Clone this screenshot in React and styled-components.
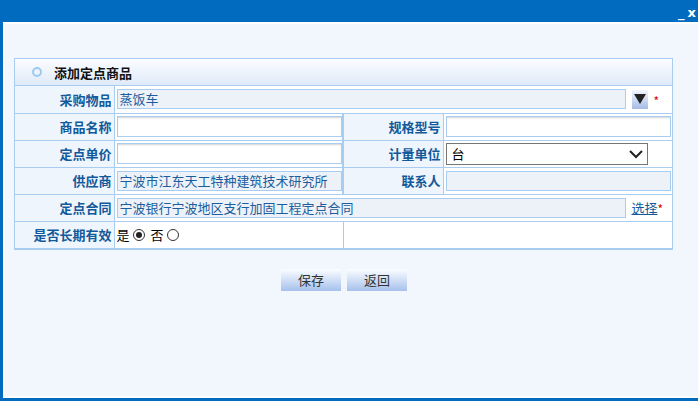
import styled, { createGlobalStyle } from 'styled-components';

const GlobalStyle = createGlobalStyle`
  html, body {
    margin: 0;
    padding: 0;
    background: #ffffff;
  }
  body {
    font-family: "Noto Sans CJK SC", "DejaVu Sans", sans-serif;
    font-size: 13px;
  }
`;

const Window = styled.div`
  width: 698px;
  height: 401px;
  display: flex;
  flex-direction: column;
  overflow: hidden;
`;

const TitleBar = styled.div`
  height: 22px;
  background: #016bc0;
  display: flex;
  justify-content: flex-end;
  align-items: flex-end;
  padding: 0 2px 2px 0;
  box-sizing: border-box;
  color: #ffffff;
  font-family: "DejaVu Sans", sans-serif;
  font-size: 13px;
  font-weight: bold;
  gap: 3px;
`;

const Body = styled.div`
  flex: 1;
  border-left: 3px solid #016bc0;
  border-bottom: 3px solid #016bc0;
  background: #ffffff;
  padding: 2px 0 2px 2px;
  display: flex;
`;

const Inner = styled.div`
  flex: 1;
  background: #f2f7fe;
  padding: 34px 0 0 9px;
`;

const Panel = styled.div`
  width: 657px;
  border: 1px solid #a9cdf0;
  background: #ffffff;
`;

const PanelHeader = styled.div`
  height: 26px;
  border-bottom: 1px solid #a9cdf0;
  background: linear-gradient(#fbfdff, #dfeaf9);
  display: flex;
  align-items: center;
  padding-left: 17px;
  gap: 12px;
  font-weight: bold;
  color: #111111;
`;

const Ring = styled.span`
  width: 6px;
  height: 6px;
  border-radius: 50%;
  border: 2px solid #9ccaf0;
`;

const Table = styled.table`
  width: 100%;
  border-collapse: collapse;
  table-layout: fixed;
`;

const Row = styled.tr`
  height: 27px;
`;

const Label = styled.td`
  background: #eef5fd;
  color: #12599b;
  font-weight: bold;
  text-align: right;
  padding: 0 2px 0 0;
  border-bottom: 1px solid #a9cdf0;
  border-right: 1px solid #a9cdf0;
  border-left: ${(p) => (p.$second ? '2px solid #a9cdf0' : 'none')};
`;

const Cell = styled.td`
  padding: 0 0 0 2px;
  border-bottom: 1px solid #a9cdf0;
  border-right: ${(p) => (p.$divider ? '1px solid #a9cdf0' : 'none')};
  background: #ffffff;
`;

const Line = styled.div`
  display: flex;
  align-items: center;
`;

const TextBox = styled.div`
  box-sizing: border-box;
  width: ${(p) => p.$w}px;
  height: ${(p) => (p.$ro ? 20 : 21)}px;
  border: 1px solid #a9cdf0;
  background: ${(p) => (p.$ro ? '#edf2f8' : '#ffffff')};
  box-shadow: ${(p) => (p.$ro ? 'none' : 'inset 0 2px 2px -1px #d4d4d4')};
  color: #1c5d9d;
  padding: 0 2px;
  line-height: 18px;
  white-space: nowrap;
  overflow: hidden;
`;

const Select = styled.div`
  box-sizing: border-box;
  width: 202px;
  height: 22px;
  border: 1px solid #767676;
  background: #ffffff;
  display: flex;
  align-items: center;
  justify-content: space-between;
  padding: 0 4px 0 5px;
  color: #000000;
`;

const DropButton = styled.span`
  width: 16px;
  height: 19px;
  margin-left: 6px;
  background: linear-gradient(#f2f6fd, #a5bce6);
  display: flex;
  align-items: center;
  justify-content: center;
`;

const Required = styled.span`
  color: #e00000;
  font-size: 12px;
  margin-left: ${(p) => p.$ml || 0}px;
  line-height: 1;
  padding-top: 3px;
`;

const LinkText = styled.a`
  color: #12599b;
  text-decoration: underline;
  margin-left: 6px;
  cursor: pointer;
`;

const RadioText = styled.span`
  color: #000000;
`;

const Radio = styled.span`
  box-sizing: border-box;
  width: 12px;
  height: 12px;
  border-radius: 50%;
  border: 1px solid #333333;
  background: #ffffff;
  display: inline-flex;
  align-items: center;
  justify-content: center;
  margin: 0 6px 0 3px;
  &::after {
    content: '';
    width: 6px;
    height: 6px;
    border-radius: 50%;
    background: ${(p) => (p.$on ? '#222222' : 'transparent')};
  }
`;

const Buttons = styled.div`
  display: flex;
  gap: 6px;
  padding: 19px 0 0 267px;
`;

const Button = styled.button`
  width: 60px;
  height: 22px;
  border: none;
  padding: 0;
  background: linear-gradient(#fbfdff, #a6c1ec);
  color: #333333;
  font-family: "Noto Sans CJK SC", sans-serif;
  font-size: 13px;
`;

const Chevron = () => (
  <svg width="14" height="10" viewBox="0 0 14 10">
    <path d="M1 2 L7 8 L13 2" fill="none" stroke="#222" strokeWidth="2" />
  </svg>
);

const Triangle = () => (
  <svg width="12" height="10" viewBox="0 0 12 10">
    <path d="M0 0 H12 L6 10 Z" fill="#222" />
  </svg>
);

const App = () => (
  <>
    <GlobalStyle />
    <Window>
      <TitleBar>
        <span>_</span>
        <span>x</span>
      </TitleBar>
      <Body>
        <Inner>
          <Panel>
            <PanelHeader>
              <Ring />
              添加定点商品
            </PanelHeader>
            <Table>
              <colgroup>
                <col style={{ width: 99 }} />
                <col style={{ width: 229 }} />
                <col style={{ width: 100 }} />
                <col />
              </colgroup>
              <tbody>
                <Row>
                  <Label>采购物品</Label>
                  <Cell colSpan={3}>
                    <Line>
                      <TextBox $ro $w={509}>蒸饭车</TextBox>
                      <DropButton>
                        <Triangle />
                      </DropButton>
                      <Required $ml={6}>*</Required>
                    </Line>
                  </Cell>
                </Row>
                <Row>
                  <Label>商品名称</Label>
                  <Cell>
                    <TextBox $w={225} />
                  </Cell>
                  <Label $second>规格型号</Label>
                  <Cell>
                    <TextBox $w={225} />
                  </Cell>
                </Row>
                <Row>
                  <Label>定点单价</Label>
                  <Cell>
                    <TextBox $w={225} />
                  </Cell>
                  <Label $second>计量单位</Label>
                  <Cell>
                    <Select>
                      <span>台</span>
                      <Chevron />
                    </Select>
                  </Cell>
                </Row>
                <Row>
                  <Label>供应商</Label>
                  <Cell>
                    <TextBox $ro $w={225}>宁波市江东天工特种建筑技术研究所</TextBox>
                  </Cell>
                  <Label $second>联系人</Label>
                  <Cell>
                    <TextBox $ro $w={225} />
                  </Cell>
                </Row>
                <Row>
                  <Label>定点合同</Label>
                  <Cell colSpan={3}>
                    <Line>
                      <TextBox $ro $w={509}>宁波银行宁波地区支行加固工程定点合同</TextBox>
                      <LinkText>选择</LinkText>
                      <Required>*</Required>
                    </Line>
                  </Cell>
                </Row>
                <Row>
                  <Label>是否长期有效</Label>
                  <Cell $divider>
                    <Line>
                      <RadioText>是</RadioText>
                      <Radio $on />
                      <RadioText>否</RadioText>
                      <Radio />
                    </Line>
                  </Cell>
                  <Cell colSpan={2} />
                </Row>
              </tbody>
            </Table>
          </Panel>
          <Buttons>
            <Button>保存</Button>
            <Button>返回</Button>
          </Buttons>
        </Inner>
      </Body>
    </Window>
  </>
);

export default App;
